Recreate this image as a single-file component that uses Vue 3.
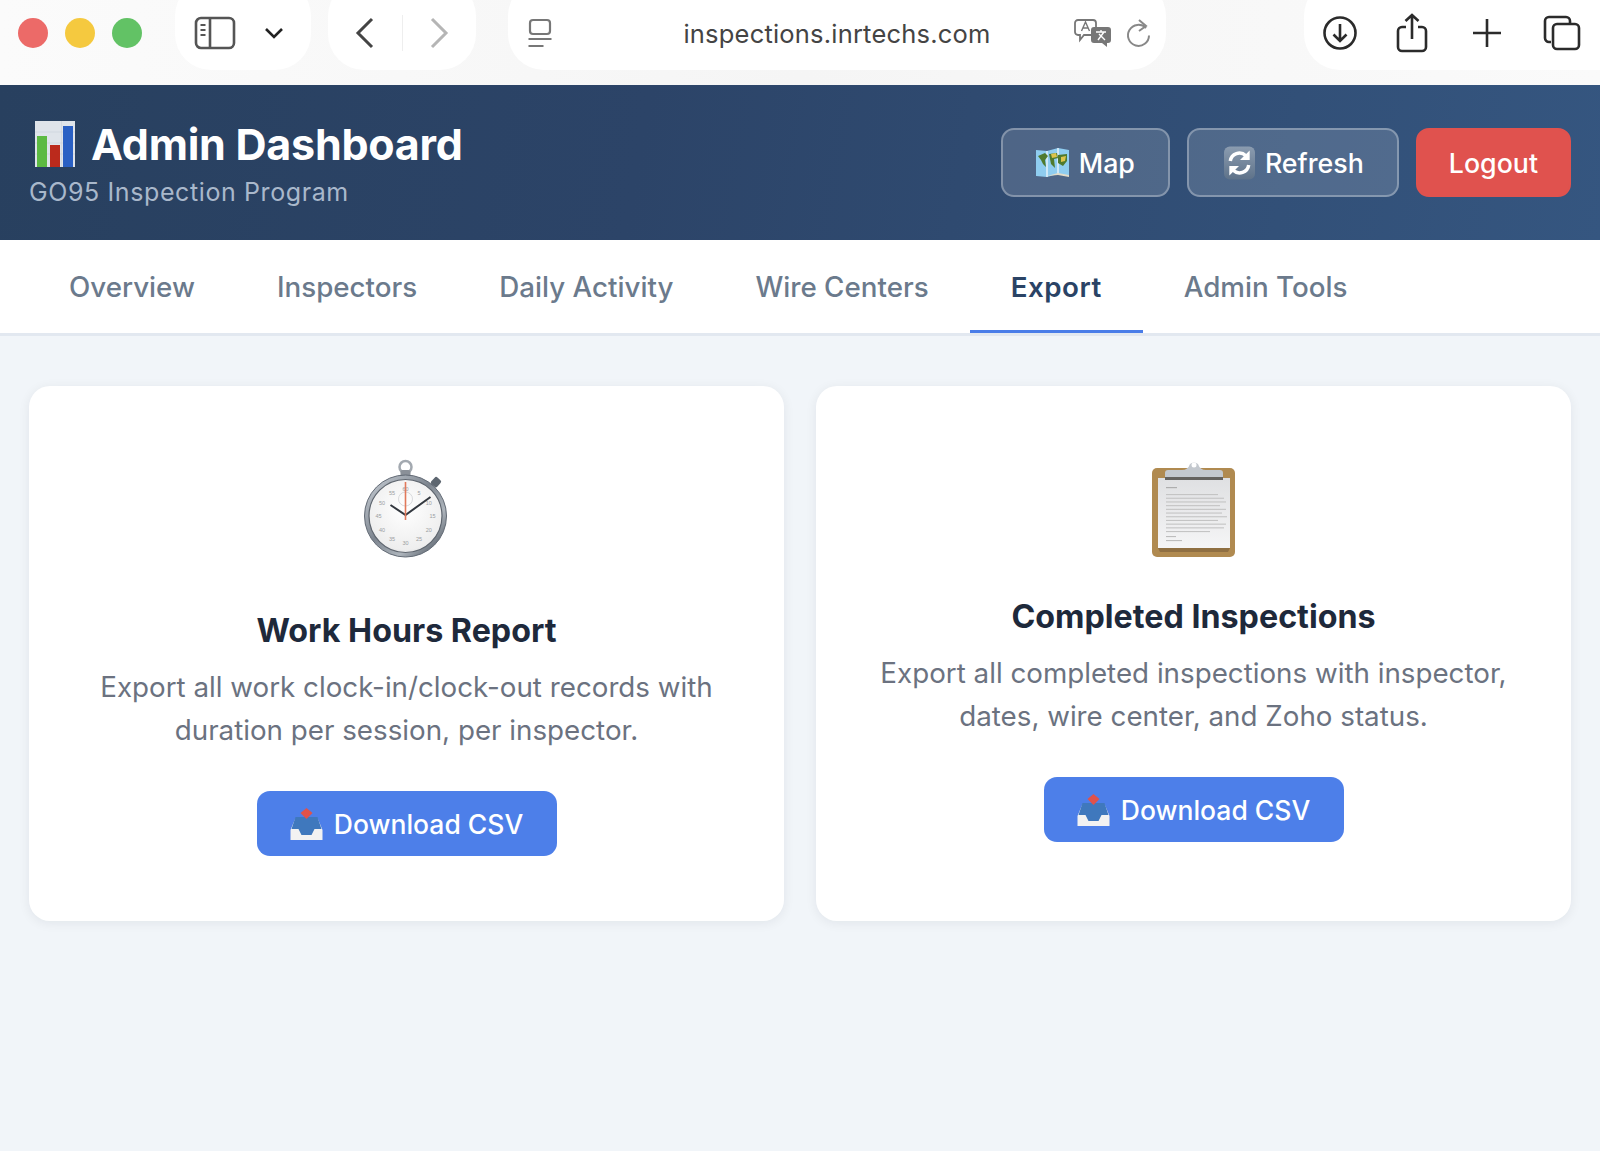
<script setup lang="ts">
const tabs = ['Overview', 'Inspectors', 'Daily Activity', 'Wire Centers', 'Export', 'Admin Tools']
const activeTab = 'Export'

// stopwatch dial numbers, placed around the centre
const dialNumbers = [60, 5, 10, 15, 20, 25, 30, 35, 40, 45, 50, 55].map((n, i) => {
  const angle = (i * 30 * Math.PI) / 180
  return { n, x: 65 + 27 * Math.sin(angle), y: 78 - 27 * Math.cos(angle) }
})
const noteLines = [52, 58, 60, 54, 60, 56, 61, 52, 60, 58, 44]
</script>

<template>
  <div class="page">
    <div class="toolbar">
      <div class="lights">
        <span class="light red"></span>
        <span class="light yellow"></span>
        <span class="light green"></span>
      </div>
      <div class="pill pill-side">
        <svg width="42" height="34" viewBox="0 0 42 34" fill="none" stroke="#555" stroke-width="2.6">
          <rect x="2" y="2" width="38" height="30" rx="5" />
          <path d="M16 2v30" />
          <path d="M6.5 9h5M6.5 14h5M6.5 19h5" stroke-width="2" />
        </svg>
        <svg width="20" height="14" viewBox="0 0 20 14" fill="none" stroke="#222" stroke-width="2.6">
          <path d="M2 3l8 8 8-8" />
        </svg>
      </div>
      <div class="pill pill-nav">
        <svg width="20" height="32" viewBox="0 0 20 32" fill="none" stroke="#444" stroke-width="3">
          <path d="M17 2L3 16l14 14" />
        </svg>
        <span class="nav-sep"></span>
        <svg width="20" height="32" viewBox="0 0 20 32" fill="none" stroke="#b5b5b5" stroke-width="3">
          <path d="M3 2l14 14L3 30" />
        </svg>
      </div>
      <div class="pill pill-address">
        <svg width="26" height="30" viewBox="0 0 26 30" fill="none" stroke="#777" stroke-width="2.2">
          <rect x="3" y="2" width="20" height="14" rx="3" />
          <path d="M1.5 21h23M1.5 28h15" />
        </svg>
        <span class="address">inspections.inrtechs.com</span>
        <div class="addr-right">
          <svg width="38" height="30" viewBox="0 0 38 30">
            <path d="M4 2h15a3 3 0 0 1 3 3v9a3 3 0 0 1-3 3H10l-4 5v-5H4a3 3 0 0 1-3-3V5a3 3 0 0 1 3-3z" fill="#fff" stroke="#777" stroke-width="1.8" />
            <path d="M7.5 13l4-9 4 9M9 10h5" fill="none" stroke="#777" stroke-width="1.4" />
            <path d="M20 9h14a3 3 0 0 1 3 3v10a3 3 0 0 1-3 3h-1v4l-5-4h-8a3 3 0 0 1-3-3V12a3 3 0 0 1 3-3z" fill="#777" />
            <path d="M22 14h10M27 12v2M24 22l6-8M25 16l6 6" fill="none" stroke="#fff" stroke-width="1.4" />
          </svg>
          <svg width="26" height="30" viewBox="0 0 26 30" fill="none" stroke="#888" stroke-width="2">
            <path d="M21 10a10.5 10.5 0 1 0 3 7.5" />
            <path d="M14 2l7 6-7 5" />
          </svg>
        </div>
      </div>
      <div class="pill pill-actions">
        <svg width="36" height="36" viewBox="0 0 36 36" fill="none" stroke="#2b2b2b" stroke-width="2.6">
          <circle cx="18" cy="18" r="15.5" />
          <path d="M18 9v17M11.5 19.5L18 26l6.5-6.5" />
        </svg>
        <svg width="32" height="40" viewBox="0 0 32 40" fill="none" stroke="#2b2b2b" stroke-width="2.6">
          <path d="M10 14H6a4 4 0 0 0-4 4v16a4 4 0 0 0 4 4h20a4 4 0 0 0 4-4V18a4 4 0 0 0-4-4h-4" />
          <path d="M16 26V2M9.5 8L16 2l6.5 6" />
        </svg>
        <svg class="plus" width="30" height="30" viewBox="0 0 30 30" fill="none" stroke="#2b2b2b" stroke-width="2.6">
          <path d="M15 1v28M1 15h28" />
        </svg>
        <svg class="tabs-icon" width="38" height="36" viewBox="0 0 38 36" fill="none" stroke="#2b2b2b" stroke-width="2.6">
          <path d="M8 27H6a4 4 0 0 1-4-4V6a4 4 0 0 1 4-4h17a4 4 0 0 1 4 4v2" />
          <rect x="10" y="9" width="26" height="25" rx="4" />
        </svg>
      </div>
    </div>

    <header class="header">
      <div class="brand">
        <h1 class="title">
          <svg class="title-icon" width="40" height="46" viewBox="0 0 40 46">
            <rect width="40" height="46" fill="#dfe4ea" />
            <path d="M26.5 0v46M0 11h40M0 22h40M0 33h40" stroke="#cbd2da" stroke-width="0.6" />
            <rect x="2" y="15" width="10" height="31" fill="#5cba42" />
            <rect x="15" y="24" width="10" height="22" fill="#bb2a1c" />
            <rect x="28" y="5" width="10" height="41" fill="#2a60c4" />
          </svg>
          <span>Admin Dashboard</span>
        </h1>
        <p class="subtitle">GO95 Inspection Program</p>
      </div>
      <div class="header-actions">
        <button class="head-btn">
          <svg width="33" height="30" viewBox="0 0 33 30">
            <path d="M0 2l11 1 11-3 11 2v26l-11-2-11 3-11-1z" fill="#8fcdf0" />
            <path d="M11 3v26M22 0v26" stroke="#eaf4fa" stroke-width="1.4" />
            <path d="M2 8l7-3 3 3-3 4 1 7-3-3-2-4zM13 6l8-1 1 5-4 1 1 9-4-4zM22 7l9-1v7l-4 5-5-3z" fill="#4f7a2e" />
            <path d="M15 6l5-1 1 4-5 1zM25 9l5-1-1 5-4 1z" fill="#dcc44c" />
            <path d="M0 27l11 1 11-3 11 2v2l-11-2-11 1-11-1z" fill="#e2dcc9" />
          </svg>
          <span>Map</span>
        </button>
        <button class="head-btn">
          <svg class="refresh-icon" width="31" height="36" viewBox="0 0 32 36">
            <defs>
              <linearGradient id="refreshBg" x1="0" y1="0" x2="0" y2="1">
                <stop offset="0" stop-color="#8b9cb0" />
                <stop offset="1" stop-color="#5e7289" />
              </linearGradient>
            </defs>
            <rect y="1" width="32" height="34" rx="6" fill="url(#refreshBg)" />
            <path d="M6.5 16a9.5 9.5 0 0 1 16-5.5" fill="none" stroke="#fff" stroke-width="3.6" />
            <path d="M26.5 5v10h-10z" fill="#fff" />
            <path d="M25.5 20a9.5 9.5 0 0 1-16 5.5" fill="none" stroke="#fff" stroke-width="3.6" />
            <path d="M5.5 31V21h10z" fill="#fff" />
          </svg>
          <span>Refresh</span>
        </button>
        <button class="head-btn logout">Logout</button>
      </div>
    </header>

    <nav class="tabs">
      <a v-for="tab in tabs" :key="tab" class="tab" :class="{ active: tab === activeTab }">{{ tab }}</a>
    </nav>

    <main class="cards">
      <section class="card">
        <svg class="work-icon" width="100" height="100" viewBox="16.5 18 100 100">
          <defs>
            <linearGradient id="rim" x1="0" y1="0" x2="1" y2="1">
              <stop offset="0" stop-color="#cfd5dc" />
              <stop offset="0.45" stop-color="#7d858f" />
              <stop offset="0.7" stop-color="#aeb5bc" />
              <stop offset="1" stop-color="#343c48" />
            </linearGradient>
            <radialGradient id="dial" cx="0.5" cy="0.4" r="0.7">
              <stop offset="0" stop-color="#fff" />
              <stop offset="0.8" stop-color="#eeeeee" />
              <stop offset="1" stop-color="#c6c8cb" />
            </radialGradient>
          </defs>
          <circle cx="65" cy="27" r="6" fill="none" stroke="#a3a9b0" stroke-width="2.5" />
          <rect x="60" y="30" width="10" height="7" rx="2" fill="#8a9098" />
          <g transform="rotate(42 65 76)">
            <rect x="61" y="26" width="8" height="9" rx="2" fill="#5d6670" />
          </g>
          <circle cx="65" cy="76" r="41" fill="url(#rim)" stroke="#626a75" stroke-width="1" />
          <circle cx="65" cy="76" r="36.5" fill="url(#dial)" stroke="#5f666f" stroke-width="1.2" />
          <text
            v-for="d in dialNumbers"
            :key="d.n"
            class="dial-num"
            :x="d.x"
            :y="d.y"
            text-anchor="middle"
          >{{ d.n }}</text>
          <circle cx="65" cy="59" r="7" fill="none" stroke="#d0d2d5" stroke-width="0.8" />
          <path d="M50 65l15 10 25-18" fill="none" stroke="#33383f" stroke-width="2" />
          <path d="M65 42v38" stroke="#e2795a" stroke-width="1.6" />
        </svg>
        <h2 class="card-title">Work Hours Report</h2>
        <p class="card-desc">Export all work clock-in/clock-out records with duration per session, per inspector.</p>
        <button class="download">
          <svg width="33" height="32" viewBox="0 0 32 32">
            <path d="M5 10h22l5 12v10H0V22z" fill="#f2f2f2" />
            <path d="M5 9h22l4 12h-7l-3 6H11l-3-6H1z" fill="#3f78bd" />
            <path d="M16 0l6 5-6 6-6-6z" fill="#e0524a" />
          </svg>
          <span>Download CSV</span>
        </button>
      </section>

      <section class="card">
        <svg class="inspect-icon" width="100" height="100" viewBox="13 18 100 100">
          <defs>
            <linearGradient id="paper" x1="0" y1="0" x2="0" y2="1">
              <stop offset="0" stop-color="#dfe0e2" />
              <stop offset="1" stop-color="#f5f5f6" />
            </linearGradient>
          </defs>
          <rect x="21" y="28" width="83" height="89" rx="5" fill="#b08a50" />
          <rect x="27" y="38" width="72" height="70" fill="url(#paper)" />
          <path d="M27 108h72l-2 4H29z" fill="#8f6f42" />
          <path d="M34 39v-6q0-3 3-3h14q6 0 8-6a6 6 0 0 1 8 0q2 6 8 6h14q3 0 3 3v6z" fill="#c3c8ce" />
          <rect x="34" y="37" width="58" height="3" fill="#64625f" />
          <circle cx="63" cy="25" r="2.5" fill="#fff" />
          <rect x="35" y="47" width="11" height="1.2" fill="#aeaeae" />
          <rect
            v-for="(w, i) in noteLines"
            :key="i"
            x="35"
            :y="54 + i * 3.7"
            :width="w"
            height="1.1"
            fill="#c4c4c4"
          />
          <rect x="35" y="96" width="10" height="1.1" fill="#bdbdbd" />
          <rect x="35" y="100" width="16" height="1.1" fill="#bdbdbd" />
        </svg>
        <h2 class="card-title">Completed Inspections</h2>
        <p class="card-desc">Export all completed inspections with inspector, dates, wire center, and Zoho status.</p>
        <button class="download">
          <svg width="33" height="32" viewBox="0 0 32 32">
            <path d="M5 10h22l5 12v10H0V22z" fill="#f2f2f2" />
            <path d="M5 9h22l4 12h-7l-3 6H11l-3-6H1z" fill="#3f78bd" />
            <path d="M16 0l6 5-6 6-6-6z" fill="#e0524a" />
          </svg>
          <span>Download CSV</span>
        </button>
      </section>
    </main>
  </div>
</template>

<style>
html, body { background: #f1f5f9; }
</style>

<style scoped>
.page {
  min-height: 1151px;
  background: #f1f5f9;
  font-family: Inter, "Liberation Sans", sans-serif;
}

.toolbar {
  display: flex;
  align-items: flex-start;
  height: 85px;
  overflow: hidden;
  background: linear-gradient(90deg, #fbfbfb, #f5f5f5 50%, #fafafa);
}
.lights {
  display: flex;
  flex: none;
  gap: 17px;
  width: 175px;
  padding: 18px 0 0 18px;
  box-sizing: border-box;
}
.light { width: 30px; height: 30px; border-radius: 50%; }
.red { background: #ec6a68; }
.yellow { background: #f5c93f; }
.green { background: #62c265; }

.pill {
  display: flex;
  flex: none;
  align-items: center;
  height: 90px;
  margin-top: -20px;
  padding-top: 16px;
  box-sizing: border-box;
  background: #fff;
  border-radius: 36px;
}
.pill-side { width: 136px; padding-left: 19px; gap: 28px; }
.pill-nav { width: 148px; margin-left: 17px; padding-left: 27px; }
.nav-sep { width: 1px; height: 36px; margin: 0 26.5px; background: #eee; }
.pill-address {
  width: 658px;
  margin-left: 32px;
  display: grid;
  grid-template-columns: 1fr auto 1fr;
  padding-left: 19px;
  padding-right: 19px;
}
.address { font-size: 25.5px; color: #444; letter-spacing: 0.2px; }
.addr-right {
  display: flex;
  gap: 13px;
  justify-content: flex-end;
  align-items: center;
  margin-right: -4px;
}
.pill-actions {
  width: 296px;
  margin-left: 138px;
  padding-left: 18px;
  gap: 38px;
  border-radius: 36px 0 0 36px;
}
.plus { margin-left: 6px; }
.tabs-icon { margin-left: 3px; }

.header {
  display: flex;
  justify-content: space-between;
  align-items: center;
  height: 155px;
  padding: 0 29px;
  background: linear-gradient(100deg, #28405f 0%, #2c4468 40%, #355680 100%);
}
.brand { padding-top: 2px; }
.title {
  display: flex;
  align-items: center;
  gap: 16px;
  margin: 0;
  font-size: 43px;
  line-height: 52px;
  font-weight: 700;
  letter-spacing: -0.25px;
  color: #fff;
}
.title-icon { margin-left: 6px; }
.subtitle {
  margin: 5px 0 0;
  font-size: 25px;
  line-height: 34px;
  letter-spacing: 0.6px;
  color: #a9b8cb;
}
.header-actions { display: flex; gap: 17px; }
.head-btn {
  display: flex;
  align-items: center;
  gap: 10px;
  height: 69px;
  padding: 0 33px;
  border: 2px solid rgba(255, 255, 255, 0.3);
  border-radius: 13px;
  background: rgba(255, 255, 255, 0.15);
  font-family: inherit;
  font-size: 26.75px;
  font-weight: 500;
  color: #fff;
}
.refresh-icon { margin-left: 2px; }
.head-btn.logout {
  padding: 0 31px;
  border-color: #e0524e;
  background: #e0524e;
}

.tabs {
  display: flex;
  height: 96px;
  box-sizing: border-box;
  padding: 0 28px;
  background: #fff;
  border-bottom: 3px solid #e2e8f0;
}
.tab {
  display: flex;
  align-items: center;
  height: 93px;
  box-sizing: border-box;
  padding: 4px 41px 0;
  border-bottom: 3px solid transparent;
  font-size: 27.75px;
  font-weight: 500;
  color: #6b7a8c;
}
.tab.active {
  font-weight: 600;
  letter-spacing: 0.5px;
  color: #2a4365;
  border-bottom-color: #4a7de8;
}

.cards {
  display: grid;
  grid-template-columns: 1fr 1fr;
  gap: 32px;
  padding: 50px 29px;
}
.card {
  display: flex;
  flex-direction: column;
  align-items: center;
  height: 535px;
  box-sizing: border-box;
  padding: 72px 40px 0;
  background: #fff;
  border-radius: 21px;
  box-shadow: 0 2px 12px rgba(15, 23, 42, 0.07);
}
.dial-num { font-size: 5.5px; fill: #9a9da1; font-family: "Liberation Sans", sans-serif; }
.work-icon { margin-bottom: 53px; }
.inspect-icon { margin-bottom: 39px; }
.card-title {
  margin: 0;
  font-size: 32.25px;
  line-height: 40px;
  font-weight: 700;
  color: #1e293b;
}
.card-desc {
  margin: 15px 0 0;
  width: 640px;
  text-align: center;
  font-size: 27.75px;
  line-height: 42.5px;
  color: #6b7280;
}
.download {
  display: flex;
  align-items: center;
  justify-content: center;
  gap: 11px;
  width: 300px;
  height: 65px;
  margin-top: 40px;
  border: 0;
  border-radius: 13px;
  background: #4d7fe9;
  font-family: inherit;
  font-size: 26.5px;
  font-weight: 500;
  color: #fff;
}
</style>
